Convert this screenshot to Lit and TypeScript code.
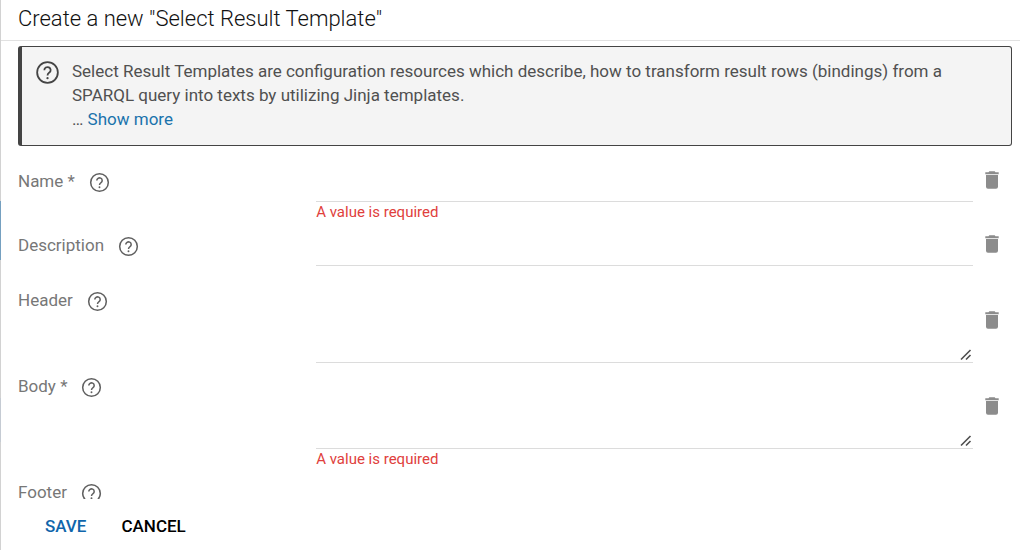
import { LitElement, html, css, svg, nothing } from "lit";
import { customElement, property } from "lit/decorators.js";

interface Field {
  id: string;
  label: string;
  multiline?: boolean;
  required?: boolean;
}

const FIELDS: Field[] = [
  { id: "name", label: "Name", required: true },
  { id: "description", label: "Description" },
  { id: "header", label: "Header", multiline: true },
  { id: "body", label: "Body", multiline: true, required: true },
  { id: "footer", label: "Footer", multiline: true },
];

const helpShape = svg`
  <circle cx="12" cy="12" r="9.2" fill="none" stroke="currentColor" stroke-width="1.6"></circle>
  <path d="M9.200 10a2.800 2.700 0 1 1 4.400 2.100c-1 .7-1.600 1.200-1.600 2.500" fill="none" stroke="currentColor" stroke-width="1.600"></path>
  <circle cx="12" cy="17" r="1" fill="currentColor"></circle>`;

@customElement("form-field")
class FormField extends LitElement {
  @property({ attribute: false }) field!: Field;

  static styles = css`
    :host {
      display: block;
      min-height: 52px;
    }
    .row {
      display: grid;
      grid-template-columns: 30% minmax(0, 1fr) 39px;
    }
    .label {
      display: flex;
      align-items: center;
      align-self: start;
      gap: 13px;
      height: 40px;
      color: #777;
    }
    .label svg {
      width: 23px;
      height: 23px;
      margin-top: 2px;
      color: #606060;
    }
    .control {
      position: relative;
      display: flex;
    }
    input,
    textarea {
      box-sizing: border-box;
      width: 100%;
      height: 41px;
      margin: 0;
      padding: 8px 0;
      border: 0;
      border-bottom: 1px solid #dcdcdc;
      border-radius: 0;
      background: transparent;
      font: inherit;
      color: #222;
      outline: none;
      resize: none;
    }
    textarea {
      height: 83px;
    }
    .grip {
      position: absolute;
      right: 1px;
      bottom: 2px;
      width: 12px;
      height: 12px;
      pointer-events: none;
    }
    .remove {
      display: flex;
      align-items: center;
      justify-content: center;
      padding: 0 2px 4px 0;
      border: 0;
      background: none;
      color: #8c8c8c;
    }
    .remove svg {
      width: 24px;
      height: 24px;
    }
    .error {
      grid-column: 2;
      height: 20px;
      font-size: 15px;
      line-height: 20px;
      color: #e0403c;
    }
  `;

  render() {
    const { id, label, multiline, required } = this.field;
    return html`
      <div class="row">
        <div class="label">
          <label for=${id}>${label}${required ? " *" : ""}</label>
          <svg viewBox="0 0 24 24" aria-hidden="true">${helpShape}</svg>
        </div>
        <div class="control">
          ${multiline
            ? html`<textarea id=${id}></textarea>
                <svg class="grip" viewBox="0 0 12 12" aria-hidden="true">
                  <path d="M1 10.500L10.500 1M6 10.500L10.500 6" fill="none" stroke="#505050" stroke-width="1.600"></path>
                </svg>`
            : html`<input id=${id} type="text" />`}
        </div>
        <button class="remove" type="button" aria-label="Remove ${label}">
          <svg viewBox="0 0 24 24" aria-hidden="true">
            <path
              d="M9.300 3.300h5.400l.8 1H18.700v1.900H5.300V4.300h3.200zM6 7h12v11.700a2 2 0 0 1-2 2H8a2 2 0 0 1-2-2z"
              fill="currentColor"
            ></path>
          </svg>
        </button>
        ${required ? html`<div class="error">A value is required</div>` : nothing}
      </div>
    `;
  }
}

@customElement("app-root")
class AppRoot extends LitElement {
  static styles = css`
    :host {
      display: grid;
      grid-template-columns: 1px minmax(0, 1fr);
      height: 100vh;
      overflow: hidden;
      background: #fff;
      font-family: Roboto, sans-serif;
      font-size: 17px;
      line-height: 24px;
    }
    .edge {
      background: linear-gradient(
        #d2d2d2 201px,
        #75a0c0 201px 260px,
        #d2d2d2 260px 398px,
        #c5cbd3 398px 442px,
        #d2d2d2 442px
      );
    }
    .dialog {
      display: flex;
      flex-direction: column;
      min-height: 0;
    }
    h1 {
      flex: none;
      margin: 0;
      padding: 3px 17px 5px;
      border-bottom: 1px solid #e1e1e1;
      font-size: 22px;
      font-weight: 300;
      line-height: 32px;
      color: #111;
    }
    .content {
      flex: 1;
      min-height: 0;
      overflow-y: auto;
      scrollbar-width: none;
      padding: 5px 8px 0 17px;
    }
    .notice {
      display: flex;
      gap: 11px;
      padding: 12px 16px 14px 12px;
      border: 1px solid #444;
      border-left-width: 4px;
      border-radius: 3px;
      background: #f4f4f4;
      color: #505050;
    }
    .notice svg {
      flex: none;
      width: 27px;
      height: 27px;
      color: #444;
    }
    p {
      margin: 0;
    }
    a {
      color: #1a73ac;
      text-decoration: none;
    }
    .fields {
      display: flex;
      flex-direction: column;
      gap: 3px;
      padding-top: 15px;
    }
    .actions {
      flex: none;
      display: flex;
      gap: 19px;
      padding: 9px 36px 6px;
    }
    .actions button {
      height: 36px;
      padding: 0 8px;
      border: 0;
      background: none;
      font: inherit;
      font-weight: 500;
      color: #000;
    }
    .actions .save {
      color: #1066ab;
    }
  `;

  render() {
    return html`
      <div class="edge"></div>
      <div class="dialog">
        <h1>Create a new "Select Result Template"</h1>
        <div class="content">
          <div class="notice">
            <svg viewBox="0 0 24 24" aria-hidden="true">${helpShape}</svg>
            <div>
              <p>
                Select Result Templates are configuration resources which describe, how to transform result rows
                (bindings) from a SPARQL query into texts by utilizing Jinja templates.
              </p>
              <p>… <a href="#more">Show more</a></p>
            </div>
          </div>
          <div class="fields">${FIELDS.map((f) => html`<form-field .field=${f}></form-field>`)}</div>
        </div>
        <div class="actions">
          <button class="save" type="button">SAVE</button>
          <button type="button">CANCEL</button>
        </div>
      </div>
    `;
  }
}
